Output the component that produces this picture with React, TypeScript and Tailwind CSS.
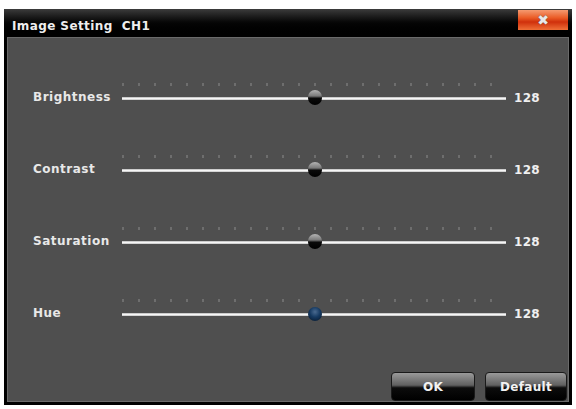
import React from "react";

type Setting = { label: string; value: number; hue?: boolean };

const settings: Setting[] = [
  { label: "Brightness", value: 128 },
  { label: "Contrast", value: 128 },
  { label: "Saturation", value: 128 },
  { label: "Hue", value: 128, hue: true },
];

function SliderRow({ label, value, hue }: Setting) {
  const pct = (value / 255) * 100;
  return (
    <div className="flex h-[72px] items-center">
      <div className="w-[114px] shrink-0 pl-[25px] -mt-[3px] text-[12px] tracking-[0.5px] font-bold text-[#e8e8e8]">{label}</div>
      <div className="relative w-[384px] shrink-0 h-[3px]">
        {/* tick dots above the track */}
        <div className="absolute left-0 right-0 -top-[14px] h-[3px] bg-[repeating-linear-gradient(90deg,#6e6e6e_0_2px,transparent_2px_16px)]" />
        <div className="h-[3px] bg-gradient-to-b from-[#b8b8b8] via-[#f6f6f6] to-[#c4c4c4]" />
        <div
          className={
            hue
              ? "absolute -top-[6px] w-[14px] h-[14px] -ml-[7px] rounded-full bg-[radial-gradient(circle_at_50%_35%,#4a6a90_0%,#163a62_45%,#061426_100%)]"
              : "absolute -top-[7px] w-[14px] h-[15px] -ml-[7px] rounded-full bg-[linear-gradient(to_bottom,#b4b4b4_0%,#7a7a7a_40%,#0a0a0a_55%,#000_100%)]"
          }
          style={{ left: `${pct}%` }}
        />
      </div>
      <div className="pl-[8px] -mt-[1px] text-[12px] tracking-[0.3px] font-bold text-[#f0f0f0]">{value}</div>
    </div>
  );
}

function DlgButton({ children, w }: { children: React.ReactNode; w: string }) {
  return (
    <button
      className={`${w} h-[29px] rounded-[4px] border border-[#1a1a1a] bg-[linear-gradient(to_bottom,#9a9a9a_0%,#606060_45%,#0c0c0c_55%,#000_100%)] text-[12px] tracking-[0.3px] font-bold text-[#f2f2f2]`}
    >
      {children}
    </button>
  );
}

export default function App() {
  return (
    <div className="w-[576px] h-[409px] bg-white pt-[9px] pl-[4px] font-['DejaVu_Sans',sans-serif]">
      <div className="w-[568px] h-[396px] bg-black flex flex-col">
        {/* title bar */}
        <div className="h-[28px] flex items-start justify-between bg-gradient-to-b from-[#3c3c3c] via-[#050505] to-black">
          <div className="pl-[8px] pt-[8px] text-[12px] tracking-[0.4px] font-bold text-[#eeeeee] whitespace-pre">Image Setting  CH1</div>
          <div className="mt-[1px] mr-[4px] w-[50px] h-[20px] flex items-center justify-center bg-[linear-gradient(to_bottom,#f59a70_0%,#ea5a24_40%,#d0300c_60%,#f07038_100%)]">
            <span className="text-[14px] font-bold leading-none text-[#e8e8e8] [text-shadow:0_0_1px_#444]">✖</span>
          </div>
        </div>
        {/* content panel */}
        <div className="flex-1 mx-[3px] mb-[3px] border border-[#6a6a6a] bg-[#4f4f4f] flex flex-col">
          <div className="pt-[24px]">
            {settings.map((s) => (
              <SliderRow key={s.label} {...s} />
            ))}
          </div>
          <div className="flex-1" />
          <div className="flex justify-end gap-[10px] pr-[1px]">
            <DlgButton w="w-[84px]">OK</DlgButton>
            <DlgButton w="w-[82px]">Default</DlgButton>
          </div>
        </div>
      </div>
    </div>
  );
}
